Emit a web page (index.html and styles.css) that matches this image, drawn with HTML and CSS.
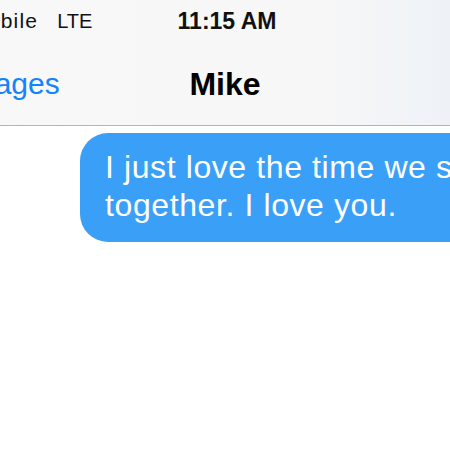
FILE: index.html
```html
<!DOCTYPE html>
<html lang="en">
<head>
    <meta charset="UTF-8">
    <meta name="viewport" content="width=device-width, initial-scale=1.0">
    <title>Mike</title>
    <link rel="stylesheet" href="styles.css">
</head>
<body>
    <div class="phone">
        <header class="top">
            <div class="status">
                <div class="carrier">
                    <span class="carrier-name">T-Mobile</span>
                    <span>LTE</span>
                </div>
                <div class="clock">11:15 AM</div>
                <div class="battery"></div>
            </div>
            <nav class="navbar">
                <a href="#" class="back">
                    <svg width="18" height="30" viewBox="0 0 18 30" aria-hidden="true">
                        <path d="M15 2 L3 15 L15 28" fill="none" stroke="currentColor" stroke-width="3.5" stroke-linecap="round" stroke-linejoin="round"/>
                    </svg>
                    Messages
                </a>
                <h1 class="title">Mike</h1>
                <span class="nav-right"></span>
            </nav>
        </header>

        <main class="thread">
            <div class="bubble sent">I just love the time we spend together. I love you.</div>
        </main>
    </div>
</body>
</html>
```

FILE: styles.css
```css
html, body {
    margin: 0;
    padding: 0;
    overflow: hidden;
    background-color: #fff;
}
body {
    font-family: 'Liberation Sans', Arial, sans-serif;
    color: #000;
}
.phone {
    width: 450px;
    height: 450px;
}
.top {
    background: linear-gradient(90deg, #f8f8f8 0%, #f7f7f7 70%, #eef2f7 100%);
    border-bottom: 1px solid #b3b3b3;
}
.status {
    display: grid;
    grid-template-columns: 1fr auto 1fr;
    height: 42px;
    line-height: 42px;
    font-size: 20px;
}
.carrier {
    display: flex;
    gap: 19px;
    margin-left: -52px;
    white-space: nowrap;
    color: #111;
}
.carrier-name {
    font-size: 21px;
    letter-spacing: 1.2px;
}
.clock {
    margin-left: 4px;
    font-size: 23px;
    font-weight: bold;
    color: #111;
}
.navbar {
    display: grid;
    grid-template-columns: 1fr auto 1fr;
    height: 83px;
    line-height: 84px;
}
.back {
    display: flex;
    align-items: center;
    gap: 8px;
    margin-left: -103px;
    white-space: nowrap;
    font-size: 30px;
    color: #1583fb;
    text-decoration: none;
}
.title {
    margin: 0;
    font-size: 32px;
    font-weight: bold;
}
.thread {
    padding-top: 7px;
}
.bubble {
    box-sizing: border-box;
    width: 490px;
    margin-left: 80px;
    padding: 15px 25px 18px 25px;
    border-radius: 28px;
    font-size: 32px;
    line-height: 38px;
    letter-spacing: 0.6px;
}
.sent {
    background-color: #3a9ff7;
    color: #fff;
}
```
